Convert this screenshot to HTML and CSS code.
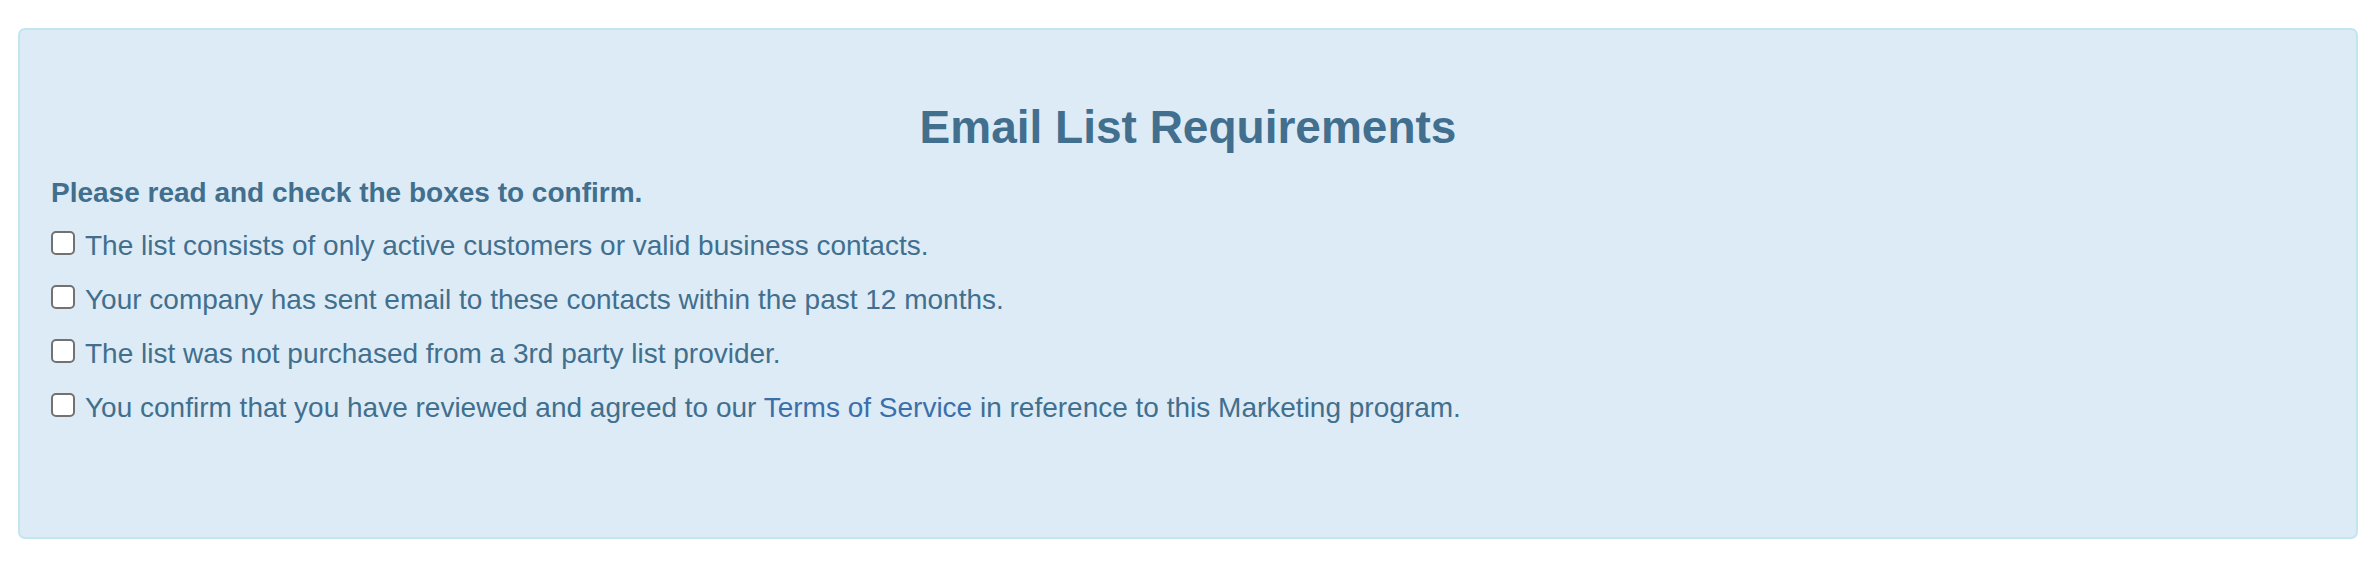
FILE: index.html
```html
<!DOCTYPE html>
<html lang="en">
<head>
    <meta charset="UTF-8">
    <meta name="viewport" content="width=device-width, initial-scale=1.0">
    <title>Email List Requirements</title>
    <link rel="stylesheet" href="styles.css">
</head>
<body>

<div class="page">
    <div class="alert-box">
        <h2 class="title">Email List Requirements</h2>
        <p class="lead">Please read and check the boxes to confirm.</p>

        <label class="check-row">
            <input type="checkbox" class="check">
            <span>The list consists of only active customers or valid business contacts.</span>
        </label>
        <label class="check-row">
            <input type="checkbox" class="check">
            <span>Your company has sent email to these contacts within the past 12 months.</span>
        </label>
        <label class="check-row">
            <input type="checkbox" class="check">
            <span>The list was not purchased from a 3rd party list provider.</span>
        </label>
        <label class="check-row">
            <input type="checkbox" class="check">
            <span>You confirm that you have reviewed and agreed to our <a href="#" class="tos">Terms of Service</a> in reference to this Marketing program.</span>
        </label>
    </div>
</div>

</body>
</html>
```

FILE: styles.css
```css
body {
    margin: 0;
    background: #ffffff;
    font-family: "Liberation Sans", Arial, Helvetica, sans-serif;
    color: #416f8e;
}
.page {
    padding: 28px 22px 0 18px;
}
.alert-box {
    background: #ddebf6;
    border: 2px solid #c3e5ef;
    border-radius: 7px;
    padding: 72px 31px 93px 31px;
}
.title {
    margin: 0 0 23px 0;
    font-size: 46px;
    line-height: 50px;
    font-weight: bold;
    text-align: center;
    color: #426f8e;
}
.lead {
    margin: 0 0 17px 0;
    font-size: 28px;
    line-height: 36px;
    font-weight: bold;
}
.check-row {
    display: flex;
    align-items: flex-start;
    gap: 10px;
    font-size: 28px;
    line-height: 36px;
    margin-bottom: 18px;
    cursor: pointer;
}
.check {
    appearance: none;
    -webkit-appearance: none;
    box-sizing: border-box;
    flex: none;
    width: 24px;
    height: 24px;
    margin: 3px 0 0 0;
    background: #ffffff;
    border: 2px solid #727272;
    border-radius: 5px;
}
.check:checked {
    background: #3b6fab;
    border-color: #3b6fab;
}
.tos {
    color: #3b6fab;
    text-decoration: none;
}
.tos:hover {
    text-decoration: underline;
}
```
